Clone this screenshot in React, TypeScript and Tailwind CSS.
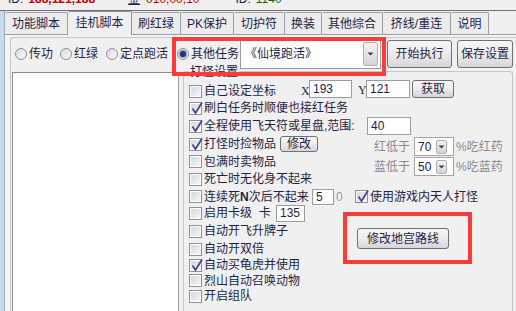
import type { ReactNode } from "react";

const TABS = [
  { label: "功能脚本", w: "w-[63px]" },
  { label: "挂机脚本", w: "w-[64px]", active: true },
  { label: "刷红绿", w: "w-[49px]" },
  { label: "PK保护", w: "w-[53px]" },
  { label: "切护符", w: "w-[51px]" },
  { label: "换装", w: "w-[37px]" },
  { label: "其他综合", w: "w-[61px]" },
  { label: "挤线/重连", w: "w-[68px]" },
  { label: "说明", w: "w-[38px]" },
];

function Check({ checked }: { checked?: boolean }) {
  return (
    <span className="relative flex h-[13px] w-[13px] shrink-0 items-center justify-center border border-[#8f909a] bg-white">
      <span className="h-[9px] w-[9px] bg-gradient-to-br from-[#d6d7dc] to-[#f6f6f8]" />
      {checked && (
        <svg className="absolute left-[1px] top-[-2px]" width="13" height="14" viewBox="0 0 13 14">
          <path d="M1.5 7.5 L4.5 12 L11 1.5" fill="none" stroke="#474790" strokeWidth="1.8" />
        </svg>
      )}
    </span>
  );
}

function Radio({ checked }: { checked?: boolean }) {
  return (
    <span className="flex h-[12px] w-[12px] shrink-0 items-center justify-center rounded-full border border-[#8e8f98] bg-gradient-to-br from-[#d9dadf] to-[#fbfbfb]">
      {checked && <span className="h-[6px] w-[6px] rounded-full bg-[#24327e] shadow-[0_0_0_1px_#8a96c8]" />}
    </span>
  );
}

function Btn({ className, children }: { className: string; children: ReactNode }) {
  return (
    <span
      className={`flex shrink-0 items-center justify-center rounded-[3px] border border-[#707070] bg-gradient-to-b from-[#f6f6f6] via-[#ececec] to-[#d6d6d6] ${className}`}
    >
      {children}
    </span>
  );
}

function Field({ className, children }: { className: string; children?: ReactNode }) {
  return (
    <span className={`flex shrink-0 items-center border border-[#9c9c9c] bg-white pl-[3px] ${className}`}>
      {children}
    </span>
  );
}

function Arrow({ className }: { className: string }) {
  return (
    <span
      className={`flex shrink-0 items-center justify-center rounded-[2px] border border-[#aeb0b6] bg-gradient-to-b from-[#f4f4f4] to-[#d4d4d8] ${className}`}
    >
      <svg width="7" height="4" viewBox="0 0 7 4">
        <path d="M0.5 0.5 H6.5 L3.5 3.5 Z" fill="#3d3d4a" />
      </svg>
    </span>
  );
}

function MiniCombo({ value }: { value: string }) {
  return (
    <span className="flex h-[19px] w-[40px] shrink-0 items-center border border-[#a5a5a5] bg-white pl-[3px] text-[#1f1f47]">
      <span className="flex-1">{value}</span>
      <Arrow className="mr-[6px] h-[14px] w-[11px]" />
    </span>
  );
}

export default function App() {
  return (
    <div className="relative h-[311px] w-[516px] overflow-hidden bg-[#f0f0f0] font-['Liberation_Sans','Noto_Sans_CJK_SC',sans-serif] text-[12px] leading-[14px] text-[#1f1f47]">
      {/* cut-off status line */}
      <div className="h-[11px] overflow-hidden border-b border-[#6f6f6f]">
        <div className="-mt-[8px] flex h-[14px] items-center whitespace-nowrap">
          <span className="ml-[8px]">ID:</span>
          <span className="ml-[5px] font-bold text-[#c80000]">188,121,188</span>
          <span className="ml-[33px] underline">金</span>
          <span className="ml-[6px] text-[#c80000]">010,00,10</span>
          <span className="ml-[36px]">ID:</span>
          <span className="ml-[5px] text-[#007000]">1140</span>
        </div>
      </div>

      <div className="flex h-[300px]">
        <div className="w-[4px] bg-[#c7daf0]" />
        <div className="flex flex-1 flex-col border-l border-[#a3acb6]">
          {/* tabs */}
          <div className="flex h-[24px] items-end">
            {TABS.map((t) =>
              t.active ? (
                <div
                  key={t.label}
                  className={`relative z-10 -mb-px flex h-[24px] ${t.w} items-center justify-center rounded-t-[2px] border-r border-t border-[#8d939c] bg-[#f0f0f0] pb-[1px]`}
                >
                  {t.label}
                </div>
              ) : (
                <div
                  key={t.label}
                  className={`flex h-[22px] ${t.w} items-center justify-center rounded-t-[2px] border-r border-t border-[#9a9fa6] bg-[#ececec]`}
                >
                  {t.label}
                </div>
              )
            )}
          </div>

          {/* page */}
          <div className="flex-1 border-t border-[#9a9fa6] bg-[#f5f5f5] pl-[5px] pt-[2px]">
            <div className="h-[280px] rounded-tl-[3px] border-l border-t border-[#c6c6c6] bg-[#f0f0f0]">
              {/* mode radios */}
              <div className="mt-[1px] flex h-[30px] items-center pl-[4px] whitespace-nowrap">
                <Radio />
                <span className="ml-[2px]">传功</span>
                <span className="ml-[7px]">
                  <Radio />
                </span>
                <span className="ml-[2px]">红绿</span>
                <span className="ml-[8px]">
                  <Radio />
                </span>
                <span className="ml-[2px]">定点跑活</span>
                <span className="ml-[9px]">
                  <Radio checked />
                </span>
                <span className="ml-[2px]">其他任务</span>
                <span className="ml-[1px] flex h-[29px] w-[141px] shrink-0 items-center border border-[#9a9a9a] bg-white pl-[4px]">
                  <span className="flex-1">《仙境跑活》</span>
                  <Arrow className="mr-[2px] h-[24px] w-[15px]" />
                </span>
                <Btn className="ml-[6px] h-[28px] w-[65px]">开始执行</Btn>
                <Btn className="ml-[5px] h-[28px] w-[56px]">保存设置</Btn>
              </div>

              <div className="mt-[2px] flex">
                {/* list */}
                <div className="ml-[1px] mt-[1px] h-[260px] w-[167px] border border-[#a0a0a0] border-l-[#8c8c8c] border-t-[#8c8c8c] bg-white" />

                {/* group box */}
                <div className="relative ml-[4px] h-[260px] w-[330px] rounded-[3px] border border-[#c6c6c6] pl-[5px] pt-[11px] whitespace-nowrap">
                  <span className="absolute left-[5px] top-[-6px] bg-[#f0f0f0] px-[1px] leading-[12px]">打怪设置</span>

                  <div className="flex h-[16px] items-center">
                    <Check />
                    <span className="ml-[2px] w-[97px]">自己设定坐标</span>
                    <span className="w-[8px] font-['Liberation_Serif',serif]">X</span>
                    <Field className="-mt-[4px] h-[18px] w-[43px]">193</Field>
                    <span className="-mt-[3px] ml-[6px] w-[8px] font-['Liberation_Serif',serif]">Y</span>
                    <Field className="-mt-[4px] h-[18px] w-[44px]">121</Field>
                    <Btn className="-mt-[4px] ml-[2px] h-[18px] w-[42px]">获取</Btn>
                  </div>

                  <div className="flex h-[18px] items-center">
                    <Check checked />
                    <span className="ml-[2px]">刷白任务时顺便也接红任务</span>
                  </div>

                  <div className="flex h-[18px] items-center">
                    <Check checked />
                    <span className="ml-[2px] w-[163px]">全程使用飞天符或星盘,范围:</span>
                    <Field className="h-[18px] w-[44px]">40</Field>
                  </div>

                  <div className="flex h-[18px] items-center">
                    <Check checked />
                    <span className="ml-[2px] w-[76px]">打怪时捡物品</span>
                    <Btn className="h-[16px] w-[38px]">修改</Btn>
                    <span className="ml-[56px] mt-[5px] flex items-center text-[#8a8a8a]">
                      <span className="w-[40px]">红低于</span>
                      <MiniCombo value="70" />
                      <span className="ml-[2px]">%吃红药</span>
                    </span>
                  </div>

                  <div className="flex h-[17px] items-center">
                    <Check />
                    <span className="ml-[2px] w-[170px]">包满时卖物品</span>
                    <span className="mt-[10px] flex items-center text-[#8a8a8a]">
                      <span className="w-[40px]">蓝低于</span>
                      <MiniCombo value="50" />
                      <span className="ml-[2px]">%吃蓝药</span>
                    </span>
                  </div>

                  <div className="flex h-[18px] items-center">
                    <Check />
                    <span className="ml-[2px]">死亡时无化身不起来</span>
                  </div>

                  <div className="flex h-[17px] items-center">
                    <Check />
                    <span className="ml-[2px] w-[108px]">
                      连续死<span className="font-bold">N</span>次后不起来
                    </span>
                    <Field className="h-[16px] w-[22px]">5</Field>
                    <span className="w-[21px] pl-[2px] text-[#9a9a9a]">0</span>
                    <Check checked />
                    <span className="ml-[2px]">使用游戏内天人打怪</span>
                  </div>

                  <div className="flex h-[16px] items-center">
                    <Check />
                    <span className="ml-[2px] w-[72px]">启用卡级&nbsp;&nbsp;卡</span>
                    <Field className="h-[17px] w-[29px]">135</Field>
                  </div>

                  <div className="flex h-[20px] items-center">
                    <Check />
                    <span className="ml-[2px] w-[153px]">自动开飞升牌子</span>
                    <Btn className="mt-[15px] h-[21px] w-[92px]">修改地宫路线</Btn>
                  </div>

                  <div className="flex h-[16px] items-center">
                    <Check />
                    <span className="ml-[2px]">自动开双倍</span>
                  </div>

                  <div className="flex h-[16px] items-center">
                    <Check checked />
                    <span className="ml-[2px]">自动买龟虎并使用</span>
                  </div>

                  <div className="flex h-[15px] items-center">
                    <Check />
                    <span className="ml-[2px]">烈山自动召唤动物</span>
                  </div>

                  <div className="flex h-[16px] items-center">
                    <Check />
                    <span className="ml-[2px]">开启组队</span>
                  </div>
                </div>
              </div>
            </div>
          </div>
        </div>
      </div>

      {/* red annotation boxes */}
      <div className="absolute left-[172px] top-[37px] z-20 h-[39px] w-[214px] border-[4px] border-[#fb3a3a]" />
      <div className="absolute left-[343px] top-[212px] z-20 h-[52px] w-[129px] border-[4px] border-[#fb3a3a]" />
    </div>
  );
}
